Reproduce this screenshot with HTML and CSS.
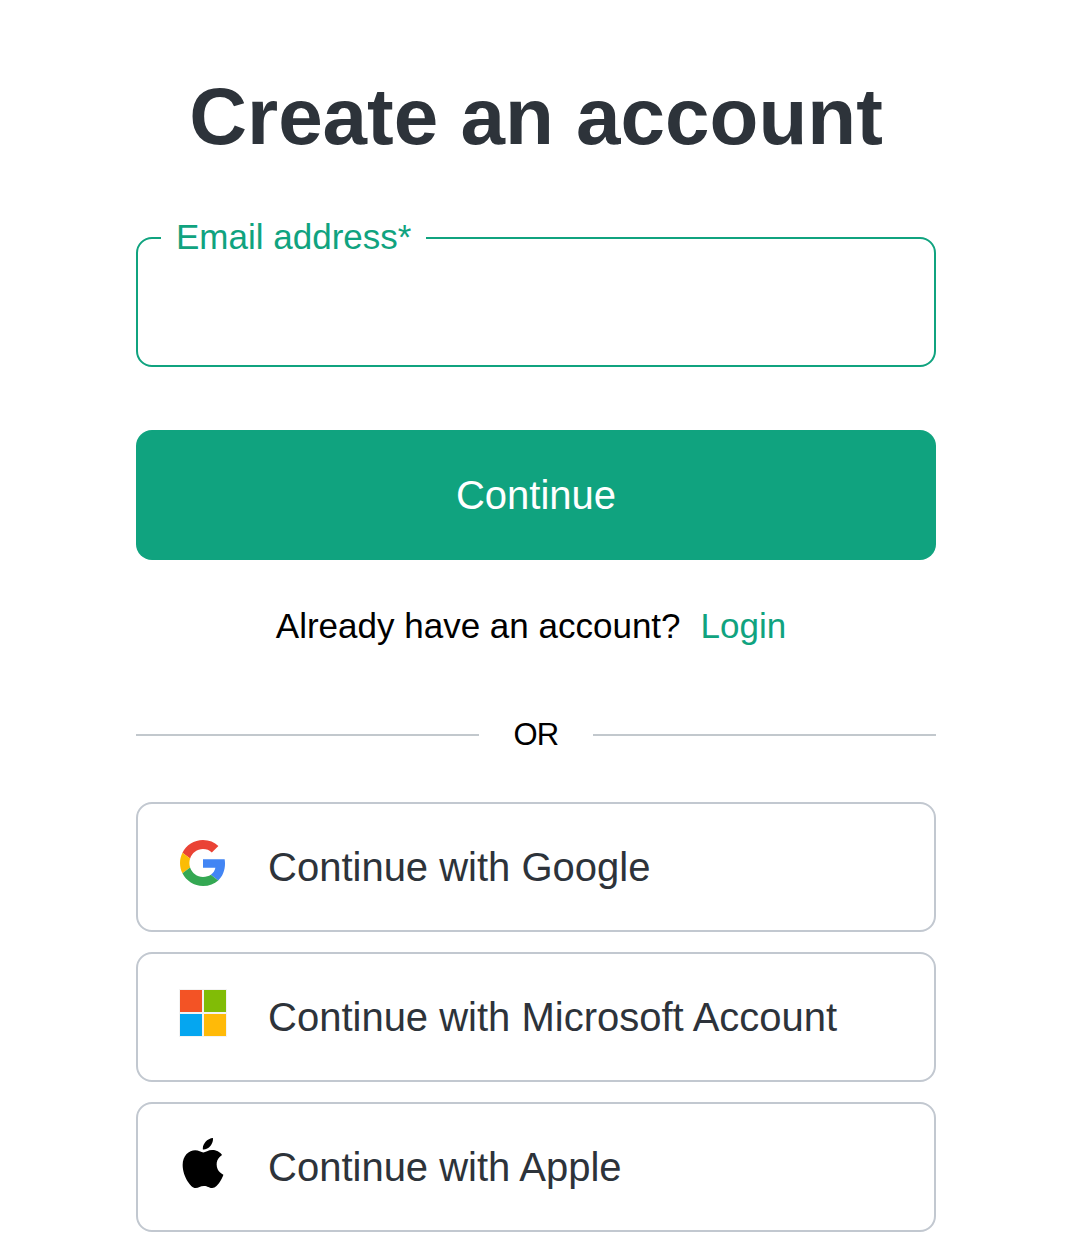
FILE: index.html
```html
<!DOCTYPE html>
<html lang="en">
<head>
<meta charset="utf-8">
<title>Create an account</title>
<link rel="stylesheet" href="styles.css">
</head>
<body>
<main class="signup">
  <h1 class="title">Create an account</h1>
  <form class="form">
    <fieldset class="field">
      <legend class="field-label"><label for="email">Email address*</label></legend>
      <input class="field-input" id="email" type="email">
    </fieldset>
    <button class="submit" type="button">Continue</button>
  </form>
  <p class="login"><span>Already have an account?</span><a class="login-link" href="#">Login</a></p>
  <div class="divider"><span class="divider-text">OR</span></div>
  <div class="providers">
    <button class="provider" type="button">
      <svg class="provider-icon" viewBox="0 0 48 48"><path fill="#EA4335" d="M24 9.5c3.54 0 6.71 1.22 9.21 3.6l6.85-6.85C35.9 2.38 30.47 0 24 0 14.62 0 6.51 5.38 2.56 13.22l7.98 6.19C12.43 13.72 17.74 9.5 24 9.5z"/><path fill="#4285F4" d="M46.98 24.55c0-1.57-.15-3.09-.38-4.55H24v9.02h12.94c-.58 2.96-2.26 5.48-4.78 7.18l7.73 6c4.51-4.18 7.09-10.36 7.09-17.65z"/><path fill="#FBBC05" d="M10.53 28.59c-.48-1.45-.76-2.99-.76-4.59s.27-3.14.76-4.59l-7.98-6.19C.92 16.46 0 20.12 0 24c0 3.88.92 7.54 2.56 10.78l7.97-6.19z"/><path fill="#34A853" d="M24 48c6.48 0 11.93-2.13 15.89-5.81l-7.73-6c-2.15 1.45-4.92 2.3-8.16 2.3-6.26 0-11.57-4.22-13.47-9.91l-7.98 6.19C6.51 42.62 14.62 48 24 48z"/></svg>
      <span>Continue with Google</span>
    </button>
    <button class="provider" type="button">
      <svg class="provider-icon microsoft" viewBox="0 0 50 50"><path fill="#f3f3f3" d="M1 1h48v48H1z"/><path fill="#F35325" d="M2 2h22v22H2z"/><path fill="#81BC06" d="M26 2h22v22H26z"/><path fill="#05A6F0" d="M2 26h22v22H2z"/><path fill="#FFBA08" d="M26 26h22v22H26z"/></svg>
      <span>Continue with Microsoft Account</span>
    </button>
    <button class="provider" type="button">
      <svg class="provider-icon apple" viewBox="0 0 814 1000"><path d="M788.1 340.9c-5.8 4.5-108.2 62.2-108.2 190.5 0 148.4 130.3 200.9 134.2 202.2-.6 3.2-20.7 71.9-68.7 141.9-42.8 61.6-87.5 123.1-155.5 123.1s-85.5-39.5-164-39.5c-76.5 0-103.7 40.8-165.9 40.8s-105.6-57-155.5-127C46.7 790.7 0 663 0 541.8c0-194.4 126.4-297.5 250.8-297.5 66.1 0 121.2 43.4 162.7 43.4 39.5 0 101.1-46 176.3-46 28.5 0 130.9 2.6 198.3 99.2zm-234-181.5c31.1-36.9 53.1-88.1 53.1-139.3 0-7.1-.6-14.3-1.9-20.1-50.6 1.9-110.8 33.7-147.1 75.8-28.5 32.4-55.1 83.6-55.1 135.5 0 7.8 1.3 15.6 1.9 18.1 3.2.6 8.4 1.3 13.6 1.3 45.4 0 102.5-30.4 135.5-71.3z"/></svg>
      <span>Continue with Apple</span>
    </button>
  </div>
</main>
</body>
</html>
```
FILE: styles.css
```css
* {
  box-sizing: border-box;
}

body {
  margin: 0;
  background: #fff;
  color: #000;
  font-family: "Liberation Sans", Arial, sans-serif;
}

.signup {
  width: 800px;
  margin-left: 136px;
  padding-top: 71px;
}

.title {
  margin: 0;
  color: #2d333a;
  font-size: 80px;
  line-height: 92px;
  text-align: center;
  white-space: nowrap;
}

.form {
  display: flex;
  flex-direction: column;
  gap: 63px;
  padding-top: 54px;
}

.field {
  height: 150px;
  min-width: 0;
  margin: 0;
  padding: 0 23px;
  border: 2px solid #10a37f;
  border-radius: 16px;
}

.field-label {
  padding: 0 15px 2px;
  color: #10a37f;
  font-size: 35px;
  line-height: 40px;
}

.field-input {
  width: 100%;
  height: 80px;
  border: 0;
  outline: 0;
  background: transparent;
  font: inherit;
  font-size: 40px;
}

.submit {
  height: 130px;
  padding: 0;
  border: 0;
  border-radius: 16px;
  background: #10a37f;
  color: #fff;
  font: inherit;
  font-size: 40px;
}

.login {
  display: flex;
  justify-content: center;
  gap: 20px;
  margin: 46px 0 0;
  padding-right: 10px;
  font-size: 35px;
  line-height: 40px;
}

.login-link {
  color: #10a37f;
  text-decoration: none;
}

.divider {
  display: flex;
  align-items: center;
  height: 40px;
  margin-top: 69px;
  font-size: 31px;
}

.divider::before,
.divider::after {
  content: "";
  flex: 1;
  height: 2px;
  background: #c2c8cd;
}

.divider-text {
  width: 114px;
  letter-spacing: -0.8px;
  text-align: center;
}

.providers {
  display: flex;
  flex-direction: column;
  gap: 20px;
  padding-top: 47px;
}

.provider {
  display: flex;
  align-items: center;
  gap: 40px;
  height: 130px;
  padding: 0 40px;
  border: 2px solid #c2c8d0;
  border-radius: 16px;
  background: #fff;
  color: #2d333a;
  font: inherit;
  font-size: 40px;
}

.provider-icon {
  width: 50px;
  height: 46px;
  margin-bottom: 9px;
}

.provider-icon.microsoft,
.provider-icon.apple {
  height: 50px;
  margin-bottom: 8px;
}

.provider-icon.apple {
  margin-bottom: 9px;
}
```
